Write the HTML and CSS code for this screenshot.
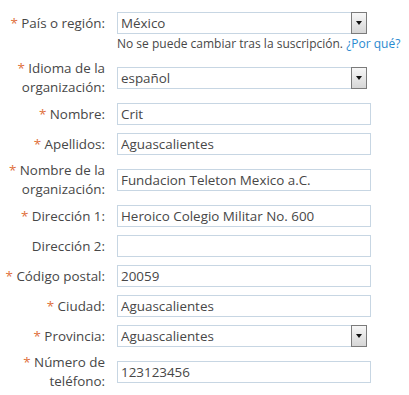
FILE: index.html
```html
<!DOCTYPE html>
<html lang="es">
<head>
    <meta charset="UTF-8">
    <title>Información de la organización</title>
    <link rel="stylesheet" href="styles.css">
</head>
<body>
    <form class="signup">
        <div class="row row-top">
            <label class="lbl"><span class="req">*</span> País o región:</label>
            <div class="field">
                <div class="select">
                    <select><option>México</option></select>
                </div>
                <p class="note">No se puede cambiar tras la suscripción. <a href="#">¿Por qué?</a></p>
            </div>
        </div>

        <div class="row">
            <label class="lbl two"><span class="req">*</span> Idioma de la<br>organización:</label>
            <div class="field">
                <div class="select">
                    <select><option>español</option></select>
                </div>
            </div>
        </div>

        <div class="row">
            <label class="lbl"><span class="req">*</span> Nombre:</label>
            <div class="field"><input type="text" value="Crit"></div>
        </div>

        <div class="row">
            <label class="lbl"><span class="req">*</span> Apellidos:</label>
            <div class="field"><input type="text" value="Aguascalientes"></div>
        </div>

        <div class="row">
            <label class="lbl two"><span class="req">*</span> Nombre de la<br>organización:</label>
            <div class="field"><input type="text" value="Fundacion Teleton Mexico a.C."></div>
        </div>

        <div class="row">
            <label class="lbl"><span class="req">*</span> Dirección 1:</label>
            <div class="field"><input type="text" value="Heroico Colegio Militar No. 600"></div>
        </div>

        <div class="row">
            <label class="lbl">Dirección 2:</label>
            <div class="field"><input type="text" value=""></div>
        </div>

        <div class="row">
            <label class="lbl"><span class="req">*</span> Código postal:</label>
            <div class="field"><input type="text" value="20059"></div>
        </div>

        <div class="row">
            <label class="lbl"><span class="req">*</span> Ciudad:</label>
            <div class="field"><input type="text" value="Aguascalientes"></div>
        </div>

        <div class="row">
            <label class="lbl"><span class="req">*</span> Provincia:</label>
            <div class="field">
                <div class="select">
                    <select><option>Aguascalientes</option></select>
                </div>
            </div>
        </div>

        <div class="row">
            <label class="lbl two"><span class="req">*</span> Número de<br>teléfono:</label>
            <div class="field"><input type="text" value="123123456"></div>
        </div>
    </form>
</body>
</html>
```

FILE: styles.css
```css
body {
    margin: 0;
    background: #ffffff;
    color: #474747;
    font-family: "Open Sans", "Noto Sans", sans-serif;
    font-size: 13.4px;
}
.signup {
    display: flex;
    flex-direction: column;
    gap: 8px;
    padding-top: 12px;
}
.row {
    display: grid;
    grid-template-columns: 105px 254px;
    column-gap: 12px;
    align-items: center;
}
.row-top {
    align-items: start;
}
.lbl {
    text-align: right;
    line-height: 19px;
    white-space: nowrap;
}
.lbl.two {
    margin: -2px 0;
}
.row-top .lbl {
    line-height: 22px;
}
.req {
    color: #e0703c; /* orange asterisk */
}
.field {
    display: flex;
    flex-direction: column;
}
input, select {
    box-sizing: border-box;
    height: 22px;
    margin: 0;
    border: 1px solid #c7d6e3;
    font-family: inherit;
    font-size: 13.4px;
    color: #474747;
    background: #ffffff;
    outline: none;
}
input {
    width: 254px;
    padding: 0 3px;
}
.select {
    position: relative;
    width: 250px;
}
.select select {
    width: 100%;
    padding: 0 20px 0 3px;
    appearance: none;
    -webkit-appearance: none;
    border-radius: 0;
}
.select::after {
    content: "";
    position: absolute;
    top: 0;
    right: 0;
    width: 14px;
    height: 20px;
    border: 1px solid #7b7b7b;
    background: linear-gradient(#f7f7f7, #d6d6d6);
    pointer-events: none;
}
.select::before {
    content: "";
    position: absolute;
    top: 9px;
    right: 5px;
    border-left: 3.5px solid transparent;
    border-right: 3.5px solid transparent;
    border-top: 4px solid #111111;
    z-index: 1;
    pointer-events: none;
}
.note {
    margin: 0;
    line-height: 19px;
    font-size: 12px;
    white-space: nowrap;
}
.note a {
    color: #2a8ad0;
    text-decoration: none;
}
```
